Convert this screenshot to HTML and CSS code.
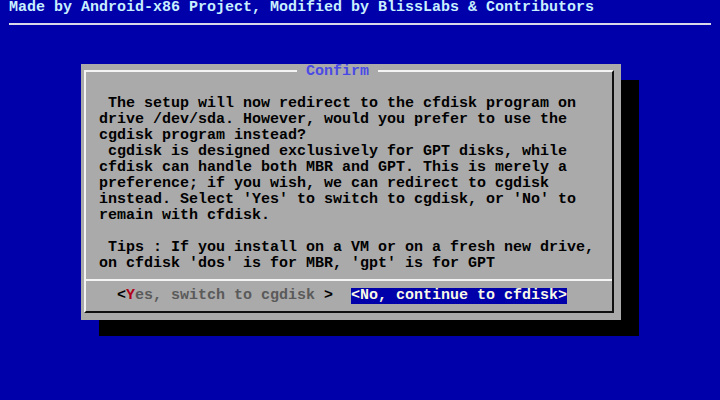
FILE: index.html
```html
<!DOCTYPE html>
<html lang="en">
<head>
    <meta charset="UTF-8">
    <meta name="viewport" content="width=720, initial-scale=1.0">
    <title>Confirm</title>
    <link rel="stylesheet" href="styles.css">
</head>
<body>
    <!-- Titulo de fundo -->
    <div class="backtitle">Made by Android-x86 Project, Modified by BlissLabs &amp; Contributors</div>
    <div class="backrule"><div class="rule-line"></div></div>

    <!-- Caixa de dialogo -->
    <div class="dialog">
        <div class="dialog-title"> Confirm </div>
        <div class="frame">
            <div class="message"> The setup will now redirect to the cfdisk program on
drive /dev/sda. However, would you prefer to use the
cgdisk program instead?
 cgdisk is designed exclusively for GPT disks, while
cfdisk can handle both MBR and GPT. This is merely a
preference; if you wish, we can redirect to cgdisk
instead. Select 'Yes' to switch to cgdisk, or 'No' to
remain with cfdisk.

 Tips : If you install on a VM or on a fresh new drive,
on cfdisk 'dos' is for MBR, 'gpt' is for GPT</div>
            <div class="separator"></div>
            <div class="buttons">
                <span class="btn"><span class="bracket">&lt;</span><span class="key">Y</span>es, switch to cgdisk <span class="bracket">&gt;</span></span>
                <span class="btn active">&lt;No, continue to cfdisk&gt;</span>
            </div>
        </div>
    </div>
</body>
</html>
```

FILE: styles.css
```css
body {
    margin: 0;
    padding: 0;
    width: 720px;
    height: 400px;
    overflow: hidden;
    background-color: #0000aa;
    font-family: "Liberation Mono", "DejaVu Sans Mono", monospace;
    font-size: 15px;
    font-weight: bold;
    line-height: 16px;
}

/* Titulo de fundo */
.backtitle {
    height: 16px;
    padding-left: 9px;
    color: #c8f0ff;
    white-space: pre;
}

.backrule {
    height: 16px;
    padding: 7px 9px 0;
    box-sizing: border-box;
}

.rule-line {
    width: 702px;
    border-top: 2px solid #d8d8e8;
}

/* Dialogo */
.dialog {
    position: relative;
    margin: 32px 0 0 81px;
    width: 540px;
    height: 256px;
    padding: 6px 7px 7px 3px;
    box-sizing: border-box;
    background-color: #aaaaaa;
    box-shadow: 18px 16px 0 #000;
}

.dialog-title {
    position: absolute;
    top: 0;
    left: 216px;
    width: 81px;
    background-color: #aaaaaa;
    color: #4a4ae6;
    white-space: pre;
}

.frame {
    height: 243px;
    box-sizing: border-box;
    border-top: 2px solid #f4f4f4;
    border-left: 2px solid #f4f4f4;
    border-right: 2px solid #101010;
    border-bottom: 2px solid #101010;
    padding-top: 24px;
}

.message {
    height: 176px;
    padding-left: 13px;
    color: #000;
    white-space: pre;
}

.separator {
    margin-top: 7px;
    border-top: 2px solid #f4f4f4;
}

/* Botoes */
.buttons {
    display: flex;
    gap: 18px;
    margin-top: 7px;
    padding-left: 31px;
    white-space: pre;
}

.btn {
    color: #5a5a5a;
}

.bracket {
    color: #000;
}

.key {
    color: #b00018;
}

.btn.active {
    background-color: #0000aa;
    color: #f8f8e8;
}
```
